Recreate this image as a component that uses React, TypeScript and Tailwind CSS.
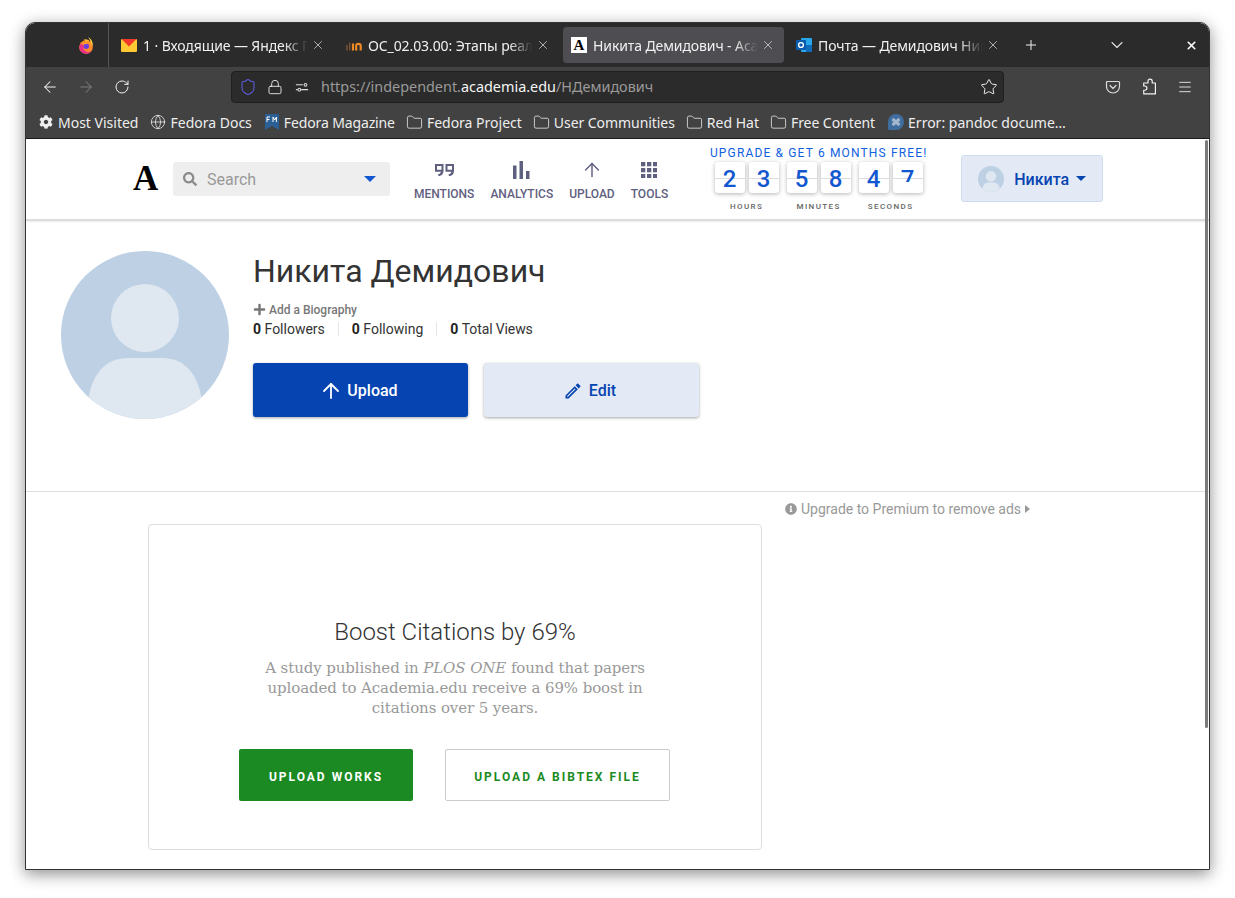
import {
  ArrowLeft,
  ArrowRight,
  ArrowUp,
  ChevronDown,
  Folder,
  Globe,
  Lock,
  Menu,
  Plus,
  RotateCw,
  Shield,
  Star,
  X,
} from "lucide-react";
import { FaCog, FaInfoCircle, FaPlus, FaSearch } from "react-icons/fa";
import { MdOutlineEdit } from "react-icons/md";
import type { ReactNode } from "react";

function FirefoxLogo() {
  return (
    <svg viewBox="0 0 16 17" className="w-4 h-[17px]">
      <circle cx="8" cy="10" r="6.800" fill="#ff8a2b" />
      <path d="M10 0c3.500 2 5.400 5.500 4.800 10-.5-2-1.300-3.200-2.400-4C12.800 4 11.500 1.800 10 0z" fill="#ffd23f" />
      <path d="M6 2.500c2-.6 4.500.2 6 2.200-1.500-.8-3-.8-4.500 0z" fill="#ffb52e" />
      <path d="M1.200 9.500a6.800 6.800 0 0 0 6.800 7.300c2.400 0 4.200-1 5.300-2.600-2.100 1.200-5.300 1-6.900-.9C5 11.500 5.300 10 6.200 9.300L3 6.500z" fill="#e8308a" />
      <circle cx="8.300" cy="9.300" r="2.700" fill="#6a3fe0" />
      <path d="M5.500 6.300c1.200-1 3.800-1.200 5 .4-1.400-.3-2.300.2-2.900.8z" fill="#ff9d2e" />
    </svg>
  );
}

function MailIcon() {
  return (
    <svg viewBox="0 0 16 13" className="w-4 h-[13px]">
      <rect width="16" height="13" rx="1" fill="#ffc933" />
      <path d="M0.500 0h15L8 7.500z" fill="#f0382b" />
    </svg>
  );
}

function MendeleyIcon() {
  return (
    <svg viewBox="0 0 16 11" className="w-4 h-[11px]">
      <path d="M1 10.500V5M3.700 10.500V2.500" stroke="#7a5030" strokeWidth="1.500" fill="none" />
      <path d="M7 3.500v7" stroke="#f08a24" strokeWidth="2.200" fill="none" />
      <path d="M10.200 10.500V5.800C10.200 4.500 11 3.800 12.300 3.800s2.400.7 2.400 2v4.700" stroke="#f08a24" strokeWidth="2.200" fill="none" />
    </svg>
  );
}

function OutlookIcon() {
  return (
    <svg viewBox="0 0 16 16" className="w-4 h-4">
      <rect x="5" y="1" width="11" height="14" rx="1" fill="#28a8ea" />
      <rect x="10" y="8" width="6" height="7" fill="#0f6cbd" />
      <rect x="0" y="3" width="10" height="10" rx="1" fill="#0a5cb0" />
      <circle cx="5" cy="8" r="2.400" fill="none" stroke="#fff" strokeWidth="1.400" />
    </svg>
  );
}

function FedoraMagIcon() {
  return (
    <svg viewBox="0 0 14 16" className="w-[14px] h-4">
      <path d="M0 0h14v16l-7-4-7 4z" fill="#2b5f96" />
      <path d="M2 3h3M2 3v5M2 5.500h2.500M8 8V3l1.700 3 1.700-3v5" stroke="#fff" strokeWidth="1" fill="none" />
    </svg>
  );
}

function PandocIcon() {
  return (
    <svg viewBox="0 0 16 16" className="w-4 h-4">
      <path d="M8 0a8 8 0 1 1 0 16H1.500C.6 16 0 15.400 0 14.500V8a8 8 0 0 1 8-8z" fill="#3f6e9e" />
      <path d="M4.500 5l7 6M11.500 5l-7 6" stroke="#a3b8d0" strokeWidth="3" />
    </svg>
  );
}

function PocketIcon() {
  return (
    <svg viewBox="0 0 16 16" className="w-4 h-4" fill="none" stroke="#dddddd" strokeWidth="1.200">
      <path d="M2.500 2.500h11a1 1 0 0 1 1 1v4a6.500 6.500 0 0 1-13 0v-4a1 1 0 0 1 1-1z" />
      <path d="M5 6.500l3 3 3-3" strokeLinecap="round" strokeLinejoin="round" />
    </svg>
  );
}

function ExtensionIcon() {
  return (
    <svg viewBox="0 0 16 16" className="w-[17px] h-[17px]" fill="none" stroke="#f2f2f2" strokeWidth="1.100" strokeLinejoin="round">
      <path d="M9.500 1a2 2 0 0 1 2 2v1.700H14.500V15H3.500v-3.500h1a2 2 0 0 0 0-4h-1V4.700H7.500V3a2 2 0 0 1 2-2z" />
    </svg>
  );
}

function Tab({ icon, title, active }: { icon: ReactNode; title: string; active?: boolean }) {
  return (
    <div className={`h-9 w-[221px] rounded-[4px] flex items-center pl-2 pr-[9px] shrink-0 ${active ? "bg-[#4e4e52]" : ""}`}>
      <div className="w-4 h-4 flex items-center justify-center shrink-0">{icon}</div>
      <div className="ml-[6px] flex-1 overflow-hidden whitespace-nowrap text-[14px] tracking-[-0.1px] text-[#f0f0f0] [mask-image:linear-gradient(to_right,black_84%,transparent_98%)]">
        {title}
      </div>
      <X className="w-[14px] h-[14px] text-[#d8d8d8] shrink-0" strokeWidth={1.300} />
    </div>
  );
}

function Bookmark({ icon, label, labelClass }: { icon: ReactNode; label: string; labelClass?: string }) {
  return (
    <div className="flex items-center gap-[5px] whitespace-nowrap">
      <div className="w-[14px] flex justify-center">{icon}</div>
      <span className={labelClass}>{label}</span>
    </div>
  );
}

function NavItem({ icon, label }: { icon: ReactNode; label: string }) {
  return (
    <div className="flex flex-col items-center">
      <div className="h-[24px] flex items-center justify-center">{icon}</div>
      <div className="mt-[5px] text-[12px] leading-[14px] font-medium text-[#5f6080]">{label}</div>
    </div>
  );
}

function TimerGroup({ digits, label, clipLast }: { digits: string[]; label: string; clipLast?: boolean }) {
  return (
    <div className="flex flex-col items-center">
      <div className="flex gap-1">
        {digits.map((d, i) => (
          <div
            key={i}
            className="relative w-[30px] h-[31px] bg-white rounded-[3px] shadow-[0_1px_4px_rgba(0,0,0,0.3)] flex justify-center overflow-hidden"
          >
            <div className="absolute left-0 right-0 top-[16px] h-px bg-[#dcdcdc]" />
            <div className={clipLast && i === 1 ? "relative h-[20px] overflow-hidden" : "relative"}>
              <span className="block text-[24px] leading-[35px] font-medium text-[#1257cf]">{d}</span>
            </div>
          </div>
        ))}
      </div>
      <div className="mt-[9px] text-[8px] leading-[10px] tracking-[1.400px] text-[#666] font-medium">{label}</div>
    </div>
  );
}

function Avatar({ className }: { className: string }) {
  return (
    <svg viewBox="0 0 168 168" className={`${className} rounded-full shrink-0`}>
      <rect width="168" height="168" fill="#bdd0e4" />
      <circle cx="84" cy="67" r="34" fill="#dfe7f1" />
      <path d="M27 150C31 122 45 107 67 107H101C123 107 137 122 141 150L141 168H27z" fill="#dfe7f1" />
    </svg>
  );
}

function Stat({ n, label, labelClass }: { n: string; label: string; labelClass?: string }) {
  return (
    <span className="whitespace-nowrap">
      <b className="font-bold text-[#222]">{n}</b> <span className={labelClass}>{label}</span>
    </span>
  );
}

export default function App() {
  return (
    <div className="w-[1235px] h-[898px] bg-white overflow-hidden pt-[22px] pl-[25px]">
      <div
        className="w-[1185px] h-[848px] border border-[#333] rounded-t-[10px] overflow-hidden bg-white flex flex-col shadow-[0_4px_16px_rgba(0,0,0,0.45)]"
        style={{ fontFamily: "Roboto, sans-serif" }}
      >
        {/* tab strip */}
        <div className="h-[44px] bg-[#2b2b2b] flex items-center shrink-0" style={{ fontFamily: '"Noto Sans", sans-serif' }}>
          <div className="ml-[52px] mr-[14px]">
            <FirefoxLogo />
          </div>
          <div className="w-px h-[44px] bg-[#555]" />
          <div className="ml-[4px] flex items-center gap-[4px]">
            <Tab icon={<MailIcon />} title="1 · Входящие — Яндекс Почта" />
            <Tab icon={<MendeleyIcon />} title="OC_02.03.00: Этапы реализации" />
            <Tab
              active
              icon={
                <div className="w-4 h-4 bg-white text-black flex items-center justify-center font-bold text-[15px] leading-none" style={{ fontFamily: '"Liberation Serif", serif' }}>
                  A
                </div>
              }
              title="Никита Демидович - Academia.edu"
            />
            <Tab icon={<OutlookIcon />} title="Почта — Демидович Никита" />
          </div>
          <Plus className="ml-[14px] w-4 h-4 text-[#f0f0f0]" strokeWidth={1.500} />
          <ChevronDown className="ml-[68px] w-5 h-5 text-[#e0e0e0]" strokeWidth={1.300} />
          <X className="ml-[58px] w-[13px] h-[13px] text-white" strokeWidth={3} />
        </div>

        {/* address bar */}
        <div className="h-[37px] pt-[2px] bg-[#424242] flex items-center shrink-0" style={{ fontFamily: '"Noto Sans", sans-serif' }}>
          <ArrowLeft className="ml-[15px] w-[18px] h-[18px] text-[#f2f2f2]" strokeWidth={1.400} />
          <ArrowRight className="ml-[18px] w-[18px] h-[18px] text-[#7a7a7a]" strokeWidth={1.400} />
          <RotateCw className="ml-[19px] w-4 h-4 text-[#f2f2f2]" strokeWidth={1.500} />
          <div className="ml-[101px] w-[773px] h-[32px] bg-[#2b2b2b] border border-[#1f1f1f] rounded-[4px] flex items-center pl-[7px] pr-[5px]">
            <Shield className="w-[18px] h-[18px] text-[#5a5fe0]" strokeWidth={1.400} />
            <Lock className="ml-[10px] w-4 h-4 text-[#e6e6e6]" strokeWidth={1.400} />
            <svg viewBox="0 0 16 16" className="ml-[12px] w-[14px] h-[14px]" fill="none" stroke="#e0e0e0" strokeWidth="1.200">
              <path d="M1 5.500h8M1 11h2" />
              <circle cx="12" cy="5.500" r="1.600" />
              <circle cx="5" cy="11" r="1.600" />
              <path d="M7 11h8" />
            </svg>
            <div className="ml-[12px] text-[14.400px] text-[#9a9a9a] whitespace-nowrap">
              https://independent.<span className="text-[#f5f5f5]">academia.edu</span>/НДемидович
            </div>
            <Star className="ml-auto w-[18px] h-[18px] text-[#f2f2f2]" strokeWidth={1.300} />
          </div>
          <div className="ml-[101px]">
            <PocketIcon />
          </div>
          <div className="ml-[19px]">
            <ExtensionIcon />
          </div>
          <Menu className="ml-[20px] w-4 h-4 text-[#f2f2f2]" strokeWidth={1.300} />
        </div>

        {/* bookmarks */}
        <div
          className="h-[34px] pt-[2px] bg-[#424242] flex items-center gap-[13px] pl-[13px] text-[14px] text-[#eeeeee] shrink-0"
          style={{ fontFamily: '"Noto Sans", sans-serif' }}
        >
          <Bookmark icon={<FaCog className="w-[14px] h-[14px] shrink-0" />} label="Most Visited" />
          <Bookmark icon={<Globe className="w-[16px] h-[16px] shrink-0" strokeWidth={1.200} />} label="Fedora Docs" />
          <Bookmark icon={<FedoraMagIcon />} label="Fedora Magazine" labelClass="tracking-[-0.130px]" />
          <Bookmark icon={<Folder className="w-[17px] h-[17px] shrink-0" strokeWidth={1.100} />} label="Fedora Project" />
          <Bookmark icon={<Folder className="w-[17px] h-[17px] shrink-0" strokeWidth={1.100} />} label="User Communities" labelClass="tracking-[-0.060px]" />
          <Bookmark icon={<Folder className="w-[17px] h-[17px] shrink-0" strokeWidth={1.100} />} label="Red Hat" />
          <Bookmark icon={<Folder className="w-[17px] h-[17px] shrink-0" strokeWidth={1.100} />} label="Free Content" labelClass="tracking-[-0.060px]" />
          <div className="flex items-center gap-[4px] whitespace-nowrap">
            <PandocIcon />
            <span>Error: pandoc docume…</span>
          </div>
        </div>

        {/* page */}
        <div className="relative flex-1 border-t border-[#1a1a1a] overflow-hidden">
          <div className="absolute right-[1px] top-[1px] w-[3px] h-[588px] bg-[#7c7c7c] rounded-full" />

          {/* site header */}
          <div className="h-[81px] flex items-start pl-[107px] border-b border-[#ddd] shadow-[0_1px_2px_rgba(0,0,0,0.2)]">
            <div className="w-[40px] mt-[22px] text-[35px] leading-[36px] font-bold text-black" style={{ fontFamily: '"Liberation Serif", serif' }}>
              A
            </div>
            <div className="mt-[23px] w-[217px] h-[34px] bg-[#eeeeee] rounded-[3px] flex items-center pl-[10px] pr-[14px]">
              <FaSearch className="w-[14px] h-[14px] text-[#8a8a8a]" />
              <span className="ml-[10px] text-[16px] leading-[20px] pt-[1px] text-[#999]">Search</span>
              <div className="ml-auto w-0 h-0 border-l-[6px] border-r-[6px] border-t-[6px] border-l-transparent border-r-transparent border-t-[#1257cf]" />
            </div>
            <div className="ml-[24px] mt-[19px] flex gap-4">
              <NavItem
                label="MENTIONS"
                icon={
                  <svg viewBox="0 0 19 12" className="w-[19px] h-[12px]" fill="#5f6080" fillRule="evenodd">
                    <path d="M0 0h8.500v6.500C8.500 9.500 7 12 3.500 12l-.5-1.800c1.600 0 2.600-1 2.800-2.400H0zM2 2v3.800h4.500V2zM10.500 0H19v6.500C19 9.500 17.500 12 14 12l-.5-1.800c1.600 0 2.600-1 2.800-2.400h-5.800zM12.500 2v3.800H17V2z" />
                  </svg>
                }
              />
              <NavItem
                label="ANALYTICS"
                icon={
                  <svg viewBox="0 0 17 18" className="w-[17px] h-[18px]" fill="#5f6080">
                    <rect x="0" y="4.500" width="3.500" height="13.500" />
                    <rect x="6.500" y="0" width="3.500" height="18" />
                    <rect x="13" y="10" width="3.500" height="8" />
                  </svg>
                }
              />
              <NavItem label="UPLOAD" icon={<ArrowUp className="w-[22px] h-[22px] text-[#5f6080]" strokeWidth={1.600} />} />
              <NavItem
                label="TOOLS"
                icon={
                  <svg viewBox="0 0 16 16" className="w-4 h-4" fill="#5f6080">
                    {[0, 6, 12].flatMap((y) =>
                      [0, 6, 12].map((x) => <rect key={`${x}-${y}`} x={x} y={y} width="4.300" height="4.300" />)
                    )}
                  </svg>
                }
              />
            </div>
            <div className="ml-[42px] w-[217px] mt-[6px] flex flex-col items-center">
              <div className="pt-[1px] text-[12px] leading-[14px] tracking-[1.150px] text-[#1160dd] whitespace-nowrap">UPGRADE &amp; GET 6 MONTHS FREE!</div>
              <div className="mt-[2px] flex gap-2">
                <TimerGroup digits={["2", "3"]} label="HOURS" />
                <TimerGroup digits={["5", "8"]} label="MINUTES" />
                <TimerGroup digits={["4", "7"]} label="SECONDS" clipLast />
              </div>
            </div>
            <div className="ml-[34px] mt-[16px] w-[142px] h-[47px] bg-[#e3e9f5] border border-[#cfdcf0] rounded-[3px] flex items-center pl-[16px]">
              <Avatar className="w-[26px] h-[26px]" />
              <span className="ml-[10px] pt-[2px] text-[16px] font-medium text-[#0645b1]">Никита</span>
              <div className="ml-[7px] w-0 h-0 border-l-[5px] border-r-[5px] border-t-[5px] border-l-transparent border-r-transparent border-t-[#0645b1]" />
            </div>
          </div>

          {/* profile */}
          <div className="h-[272px] border-b border-[#dddddd] flex items-start pl-[35px] pt-[31px]">
            <Avatar className="w-[168px] h-[168px]" />
            <div className="ml-[24px]">
              <div className="-mt-[2px] text-[32px] leading-[44px] text-[#333] whitespace-nowrap">Никита Демидович</div>
              <div className="mt-[10px] flex items-center text-[12px] leading-[14px] font-medium text-[#777]">
                <FaPlus className="w-[13px] h-[13px] -mt-[2px]" />
                <span className="ml-[3px]">Add a Biography</span>
              </div>
              <div className="mt-[2px] flex items-center text-[14px] leading-[20px] text-[#333]">
                <Stat n="0" label="Followers" />
                <div className="mx-[13px] w-px h-[14px] bg-[#e5e5e5]" />
                <Stat n="0" label="Following" />
                <div className="mx-[13px] w-px h-[14px] bg-[#e5e5e5]" />
                <Stat n="0" label="Total Views" labelClass="tracking-[-0.120px]" />
              </div>
              <div className="mt-[24px] flex gap-4">
                <div className="w-[215px] h-[54px] pt-[1px] pr-[4px] bg-[#0645b1] rounded-[3px] shadow-[0_1px_3px_rgba(0,0,0,0.35)] flex items-center justify-center text-white text-[16px] font-medium">
                  <ArrowUp className="w-[24px] h-[24px] mr-[4px]" strokeWidth={1.800} />
                  Upload
                </div>
                <div className="w-[215px] h-[54px] pt-[1px] pr-[4px] bg-[#e3e9f5] rounded-[3px] shadow-[0_1px_3px_rgba(0,0,0,0.35)] flex items-center justify-center text-[#0645b1] text-[16px] font-medium">
                  <MdOutlineEdit className="w-[20px] h-[20px] mr-[6px]" />
                  Edit
                </div>
              </div>
            </div>
          </div>

          {/* content */}
          <div className="flex items-start pl-[122px]">
            <div className="mt-[32px] w-[614px] h-[326px] border border-[#ddd] rounded-[4px] flex flex-col items-center pt-[91px]">
              <div className="text-[24px] leading-[32px] font-light text-[#333]">Boost Citations by 69%</div>
              <div className="mt-[10px] w-[420px] text-center text-[15px] leading-[20px] tracking-[-0.100px] text-[#999]" style={{ fontFamily: '"DejaVu Serif", serif' }}>
                A study published in <i>PLOS ONE</i> found that papers uploaded to Academia.edu receive a 69% boost in citations over 5 years.
              </div>
              <div className="mt-[31px] -ml-[1px] flex gap-8">
                <div className="w-[174px] h-[52px] pt-[3px] bg-[#1b8a22] rounded-[2px] flex items-center justify-center text-white text-[12px] font-bold tracking-[2px]">
                  UPLOAD WORKS
                </div>
                <div className="w-[225px] h-[52px] pt-[3px] bg-white border border-[#ccc] rounded-[2px] flex items-center justify-center text-[#1b8a22] text-[12px] font-bold tracking-[2px]">
                  UPLOAD A BIBTEX FILE
                </div>
              </div>
            </div>
            <div className="ml-[23px] mt-[8px] flex items-center text-[14px] leading-[18px] text-[#999] whitespace-nowrap">
              <FaInfoCircle className="w-[12px] h-[12px] mr-[3px]" />
              <span className="ml-[1px]">Upgrade to Premium to remove ads</span>
              <div className="ml-[4px] w-0 h-0 border-t-[4.500px] border-b-[4.500px] border-l-[5px] border-t-transparent border-b-transparent border-l-[#999]" />
            </div>
          </div>
        </div>
      </div>
    </div>
  );
}
